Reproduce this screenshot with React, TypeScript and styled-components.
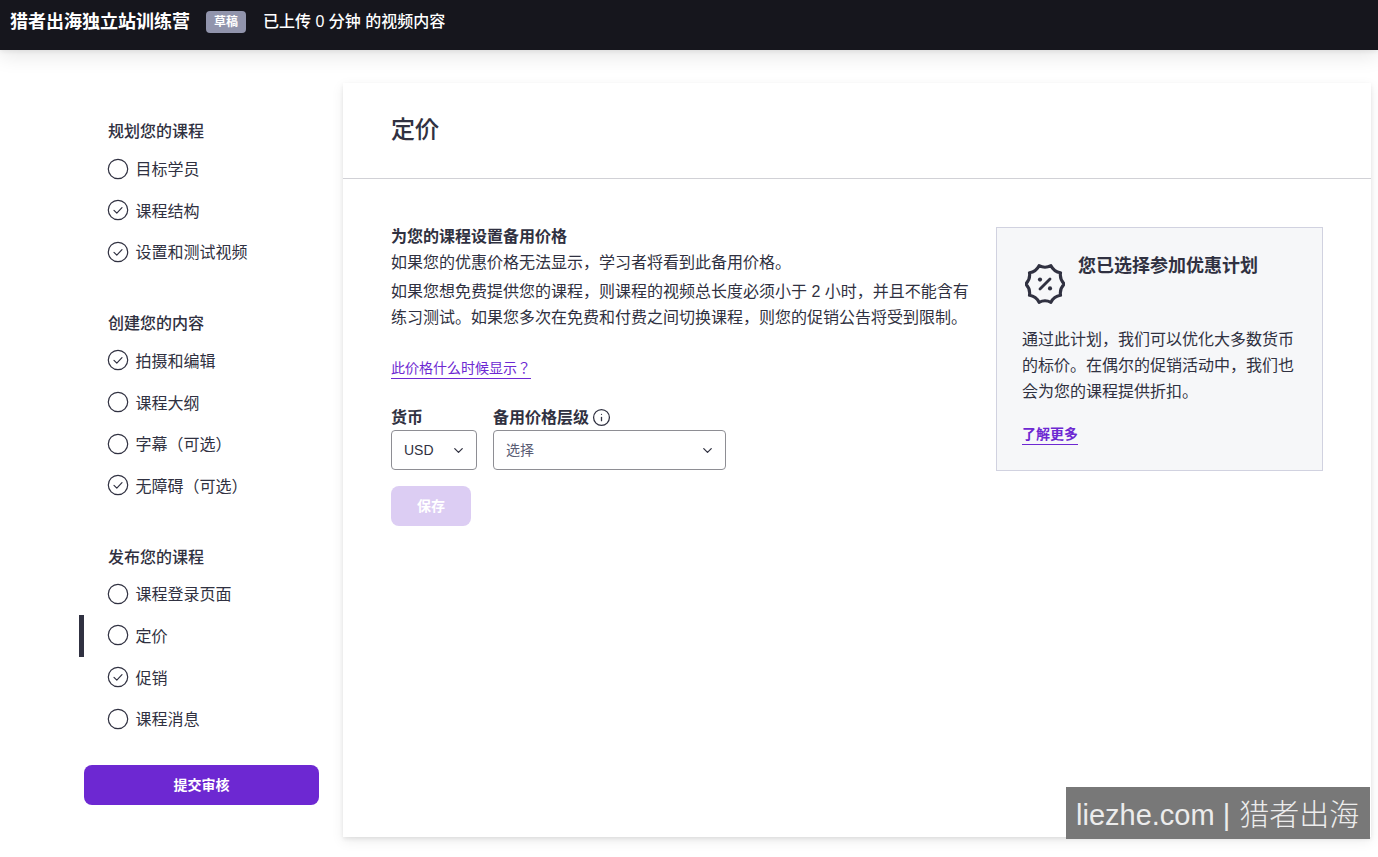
import React from "react";
import styled, { createGlobalStyle } from "styled-components";
import { ChevronDown, Info } from "lucide-react";

const GlobalStyle = createGlobalStyle`
  html, body {
    margin: 0;
    height: 100%;
    background: #fff;
    overflow: hidden;
  }
  body {
    font-family: "Liberation Sans", "Noto Sans CJK JP", "Noto Sans CJK SC", sans-serif;
    color: #303141;
  }
`;

const sections = [
  {
    title: "规划您的课程",
    items: [
      { label: "目标学员", done: false },
      { label: "课程结构", done: true },
      { label: "设置和测试视频", done: true },
    ],
  },
  {
    title: "创建您的内容",
    items: [
      { label: "拍摄和编辑", done: true },
      { label: "课程大纲", done: false },
      { label: "字幕（可选）", done: false },
      { label: "无障碍（可选）", done: true },
    ],
  },
  {
    title: "发布您的课程",
    items: [
      { label: "课程登录页面", done: false },
      { label: "定价", done: false, active: true },
      { label: "促销", done: true },
      { label: "课程消息", done: false },
    ],
  },
];

// scalloped outline of the discount badge
function badgePath(lobes: number, outer: number, inner: number) {
  const c = 20;
  const pt = (r: number, a: number) =>
    `${(c + r * Math.cos(a)).toFixed(2)} ${(c + r * Math.sin(a)).toFixed(2)}`;
  const step = (Math.PI * 2) / lobes;
  const start = -Math.PI / 2 + step / 2;
  let d = `M${pt(outer, start)}`;
  for (let i = 0; i < lobes; i++) {
    const a = start + step * i;
    d += ` Q${pt(inner, a + step / 2)} ${pt(outer, a + step)}`;
  }
  return d + "Z";
}

function StepIcon({ done }: { done: boolean }) {
  return (
    <StepSvg width="22" height="22" viewBox="0 0 22 22" fill="none">
      <circle cx="11" cy="11" r="9.7" stroke="#303141" strokeWidth="1.2" />
      {done && (
        <path
          d="M7 11.4l2.8 2.7 5.2-5.4"
          stroke="#303141"
          strokeWidth="1.2"
          strokeLinecap="round"
          strokeLinejoin="round"
        />
      )}
    </StepSvg>
  );
}

function BadgeIcon() {
  return (
    <svg width="40" height="40" viewBox="0 0 40 40" fill="none">
      <path
        d={badgePath(10, 19.2, 15.2)}
        stroke="#303141"
        strokeWidth="3.1"
        strokeLinejoin="round"
      />
      <path d="M25 15L15 25" stroke="#303141" strokeWidth="2.8" strokeLinecap="round" />
      <circle cx="15" cy="15.6" r="2.1" fill="#303141" />
      <circle cx="25" cy="24.4" r="2.1" fill="#303141" />
    </svg>
  );
}

export default function App() {
  return (
    <>
      <GlobalStyle />
      <TopBar>
        <CourseTitle>猎者出海独立站训练营</CourseTitle>
        <DraftBadge>草稿</DraftBadge>
        <UploadNote>已上传 0 分钟 的视频内容</UploadNote>
      </TopBar>
      <Layout>
        <Sidebar>
          {sections.map((section) => (
            <NavSection key={section.title}>
              <NavHeading>{section.title}</NavHeading>
              {section.items.map((item) => (
                <NavItem key={item.label} $active={!!item.active}>
                  <StepIcon done={item.done} />
                  <NavLabel>{item.label}</NavLabel>
                </NavItem>
              ))}
            </NavSection>
          ))}
          <SubmitButton>提交审核</SubmitButton>
        </Sidebar>
        <Card>
          <CardHeader>
            <CardTitle>定价</CardTitle>
          </CardHeader>
          <CardBody>
            <PriceColumn>
              <Lead>为您的课程设置备用价格</Lead>
              <Para>如果您的优惠价格无法显示，学习者将看到此备用价格。</Para>
              <Para $spaced>
                如果您想免费提供您的课程，则课程的视频总长度必须小于 2 小时，并且不能含有练习测试。如果您多次在免费和付费之间切换课程，则您的促销公告将受到限制。
              </Para>
              <HelpLink>此价格什么时候显示？</HelpLink>
              <Fields>
                <Field>
                  <FieldLabel>货币</FieldLabel>
                  <SelectBox $width={86}>
                    <span>USD</span>
                    <ChevronDown size={15} strokeWidth={2} color="#303141" />
                  </SelectBox>
                </Field>
                <Field>
                  <FieldLabel>
                    备用价格层级
                    <InfoIcon size={19} strokeWidth={1.6} color="#303141" />
                  </FieldLabel>
                  <SelectBox $width={233}>
                    <Placeholder>选择</Placeholder>
                    <ChevronDown size={15} strokeWidth={2} color="#303141" />
                  </SelectBox>
                </Field>
              </Fields>
              <SaveButton>保存</SaveButton>
            </PriceColumn>
            <PromoPanel>
              <PromoHead>
                <BadgeIcon />
                <PromoTitle>您已选择参加优惠计划</PromoTitle>
              </PromoHead>
              <PromoText>
                通过此计划，我们可以优化大多数货币的标价。在偶尔的促销活动中，我们也会为您的课程提供折扣。
              </PromoText>
              <PromoLink>了解更多</PromoLink>
            </PromoPanel>
          </CardBody>
        </Card>
      </Layout>
      <Watermark>
        liezhe.com | <WatermarkCjk>猎者出海</WatermarkCjk>
      </Watermark>
    </>
  );
}

const TopBar = styled.header`
  position: relative;
  z-index: 2;
  display: flex;
  align-items: center;
  height: 50px;
  padding: 0 0 6px 10px;
  box-sizing: border-box;
  background: #16161d;
  color: #fff;
  box-shadow: 0 2px 4px rgba(0, 0, 0, 0.06), 0 6px 20px rgba(0, 0, 0, 0.1);
`;

const CourseTitle = styled.div`
  font-size: 18px;
  font-weight: 700;
  line-height: 28px;
`;

const DraftBadge = styled.div`
  margin-left: 16px;
  width: 40px;
  height: 22px;
  border-radius: 4px;
  background: #9194ac;
  font-size: 12px;
  font-weight: 700;
  line-height: 22px;
  text-align: center;
`;

const UploadNote = styled.div`
  margin-left: 17px;
  font-size: 16px;
  font-weight: 500;
  line-height: 24px;
`;

const Layout = styled.div`
  display: flex;
  height: 754px;
  padding: 33px 7px 0 79px;
`;

const Sidebar = styled.nav`
  flex: 0 0 240px;
  margin-right: 24px;
  padding-top: 36.4px;
`;

const NavSection = styled.section`
  margin-bottom: 38px;
  &:nth-of-type(3) {
    margin-bottom: 25px;
  }
`;

const NavHeading = styled.h2`
  margin: 0 0 5px 29px;
  padding-top: 1px;
  height: 24px;
  box-sizing: border-box;
  font-size: 16px;
  font-weight: 500;
  line-height: 24px;
`;

const NavItem = styled.div<{ $active: boolean }>`
  display: flex;
  align-items: center;
  gap: 6.5px;
  height: 41.6px;
  box-sizing: border-box;
  padding-left: 23px;
  border-left: 5px solid ${(p) => (p.$active ? "#303141" : "transparent")};
  font-size: 16px;
  line-height: 24px;
`;

const StepSvg = styled.svg`
  margin-bottom: 1px;
`;

const NavLabel = styled.span`
  margin-top: 2px;
`;

const SubmitButton = styled.button`
  display: block;
  width: 235px;
  height: 40px;
  margin-left: 5px;
  padding: 0 0 2px;
  border: 0;
  border-radius: 8px;
  background: #6d28d2;
  color: #fff;
  font: inherit;
  font-size: 14px;
  font-weight: 700;
`;

const Card = styled.main`
  flex: 1;
  background: #fff;
  box-shadow: 0 2px 4px rgba(0, 0, 0, 0.08), 0 4px 12px rgba(0, 0, 0, 0.08);
`;

const CardHeader = styled.div`
  height: 96px;
  box-sizing: border-box;
  padding: 29px 48px 0;
  border-bottom: 1px solid #d1d1d6;
`;

const CardTitle = styled.h1`
  margin: 0;
  font-size: 24px;
  font-weight: 500;
  line-height: 36px;
`;

const CardBody = styled.div`
  display: grid;
  grid-template-columns: 581px 327px;
  column-gap: 24px;
  padding: 44.6px 48px 0;
`;

const PriceColumn = styled.div`
  display: flex;
  flex-direction: column;
  align-items: flex-start;
`;

const Lead = styled.div`
  font-size: 16px;
  font-weight: 700;
  line-height: 25.6px;
`;

const Para = styled.p<{ $spaced?: boolean }>`
  margin: ${(p) => (p.$spaced ? "4px" : "0.6px")} 0 0;
  font-size: 16px;
  line-height: 25.6px;
`;

const HelpLink = styled.a`
  margin-top: 27.4px;
  border-bottom: 1px solid #6d28d2;
  color: #6d28d2;
  font-size: 14px;
  line-height: 20px;
`;

const Fields = styled.div`
  display: flex;
  gap: 16px;
  margin-top: 26.4px;
`;

const Field = styled.div`
  display: flex;
  flex-direction: column;
  gap: 1px;
`;

const FieldLabel = styled.label`
  display: flex;
  align-items: center;
  gap: 3px;
  height: 24px;
  box-sizing: border-box;
  padding-top: 2px;
  font-size: 16px;
  font-weight: 700;
  line-height: 24px;
`;

const InfoIcon = styled(Info)`
  margin-top: -2px;
`;

const SelectBox = styled.div<{ $width: number }>`
  display: flex;
  align-items: center;
  justify-content: space-between;
  width: ${(p) => p.$width}px;
  height: 40px;
  box-sizing: border-box;
  padding: 0 10px 0 12px;
  border: 1px solid #8e8e94;
  border-radius: 4px;
  font-size: 14px;
`;

const Placeholder = styled.span`
  margin-bottom: 2px;
  color: #595c73;
`;

const SaveButton = styled.button`
  width: 80px;
  height: 40px;
  margin-top: 16px;
  padding: 0 0 2px;
  border: 0;
  border-radius: 8px;
  background: #dccdf3;
  color: #fff;
  font: inherit;
  font-size: 14px;
  font-weight: 700;
`;

const PromoPanel = styled.aside`
  align-self: start;
  height: 244px;
  box-sizing: border-box;
  margin-top: 3.4px;
  padding: 24px 25px 0;
  border: 1px solid #d1d2e0;
  background: #f6f7f9;
`;

const PromoHead = styled.div`
  display: flex;
  align-items: flex-start;
  gap: 13px;
  margin-left: 3px;
  padding-top: 12px;
  height: 75px;
  box-sizing: border-box;
`;

const PromoTitle = styled.h3`
  margin: -12px 0 0;
  font-size: 18px;
  font-weight: 700;
  line-height: 28px;
`;

const PromoText = styled.p`
  margin: 0.2px 0 0;
  font-size: 16px;
  line-height: 26px;
`;

const PromoLink = styled.a`
  display: inline-block;
  margin-top: 18.4px;
  border-bottom: 1px solid #6d28d2;
  color: #6d28d2;
  font-size: 14px;
  font-weight: 700;
  line-height: 20px;
`;

const Watermark = styled.div`
  position: absolute;
  left: 1066px;
  top: 787px;
  width: 304px;
  height: 52px;
  box-sizing: border-box;
  padding: 2px 0 0 10px;
  background: #787878;
  color: #ececec;
  font-family: "Liberation Sans", "Noto Sans CJK SC", sans-serif;
  font-size: 29px;
  line-height: 52px;
  white-space: nowrap;
`;

const WatermarkCjk = styled.span`
  margin-left: 1px;
  font-size: 30px;
  font-weight: 300;
`;
